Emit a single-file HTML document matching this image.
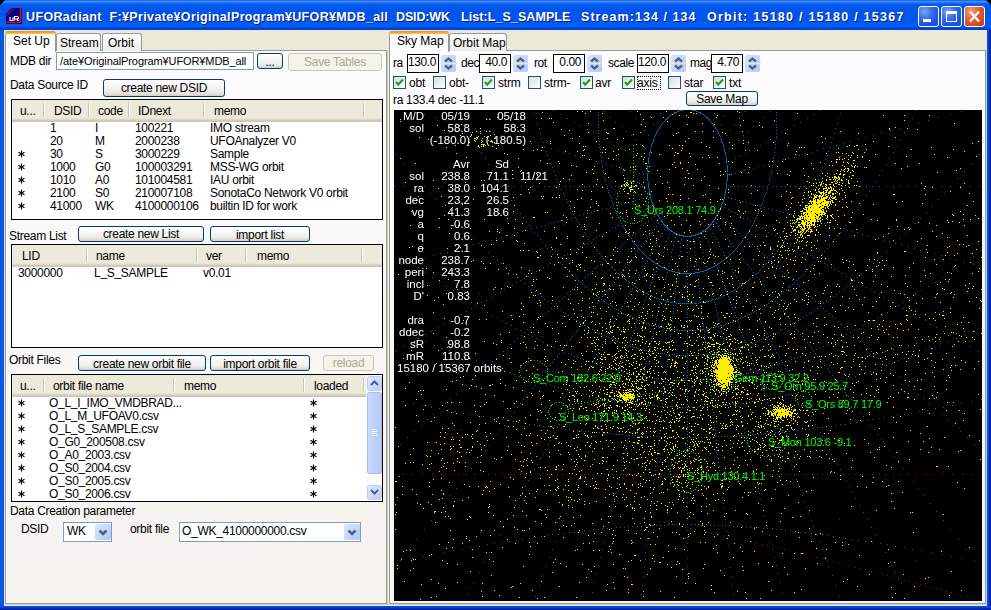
<!DOCTYPE html>
<html><head><meta charset="utf-8">
<style>
html,body{margin:0;padding:0;}
body{width:991px;height:610px;overflow:hidden;position:relative;background:#0054E3;font-family:"Liberation Sans",sans-serif;font-size:12px;color:#000;}
.a{position:absolute;}
.t{position:absolute;white-space:pre;line-height:12px;font-size:12px;}
#frame{left:0;top:0;width:991px;height:610px;background:linear-gradient(90deg,#0831D9 0,#166AEE 1px,#0855DD 2px,#0054E3 3px,#0054E3 988px,#003BDA 989px,#001EA0 990px);}
#title{left:0;top:0;width:991px;height:30px;border-radius:7px 7px 0 0;
 background:linear-gradient(180deg,#0843D6 0,#3D8DFA 1px,#3A8AF8 2px,#1769F2 3px,#0058EE 5px,#0054EA 14px,#0058EE 22px,#0064FA 26px,#0050E6 27px,#003ED8 29px);}
#client{left:4px;top:30px;width:983px;height:576px;background:#ECE9D8;}
#bottomframe{left:0;top:606px;width:991px;height:4px;background:linear-gradient(180deg,#0054E3,#003BDA 2px,#001EA0 3px);}
.ttxt{color:#fff;font-weight:bold;font-size:12.5px;line-height:12px;letter-spacing:0.6px;text-shadow:1px 1px 0 #0A1883;}
.tbtn{position:absolute;top:6px;width:19px;height:19px;border:1px solid #fff;border-radius:3px;box-sizing:content-box;
 background:radial-gradient(circle at 30% 25%,#7DA6FF 0,#3C71F0 35%,#1E52E0 70%,#1A4CD8 100%);}
.tbtn.x{background:radial-gradient(circle at 30% 25%,#F2A58A 0,#E4622F 40%,#D54418 80%,#C63C14 100%);}
.panel{position:absolute;border:1px solid #919B9C;background:linear-gradient(180deg,#FCFCFE 0,#F4F3EE 100%);box-shadow:1px 1px 0 #D0CEBF;}
.tab{position:absolute;border:1px solid #919B9C;border-bottom:none;border-radius:3px 3px 0 0;background:linear-gradient(180deg,#FFFFFF,#ECEBE5);box-sizing:border-box;}
.tab.sel{background:#FCFCFE;border-top:none;}
.tab.sel::before{content:"";position:absolute;left:-1px;right:-1px;top:0;height:3px;border-radius:3px 3px 0 0;background:linear-gradient(180deg,#E68B2C,#FFC73C);}
.btn{position:absolute;box-sizing:border-box;border:1px solid #003C74;border-radius:3px;background:linear-gradient(180deg,#FFFFFF 0,#F7F6F2 40%,#ECEBE6 75%,#D6D0C5 100%);text-align:center;white-space:pre;letter-spacing:-0.3px;}
.btn.dis{border-color:#C9C7BA;background:#F5F4EA;color:#ACA899;}
.tbox{position:absolute;box-sizing:border-box;border:1px solid #7F9DB9;background:#fff;overflow:hidden;white-space:pre;}
.lv{position:absolute;box-sizing:border-box;border:1px solid #000;background:#fff;overflow:hidden;}
.hdr{position:absolute;left:0;top:0;right:0;height:22px;background:linear-gradient(180deg,#EBEADB 0,#EBEADB 18px,#E2DFCD 19px,#D6D2BD 20px,#CBC7B8 21px);}
.sep{position:absolute;top:3px;width:1px;height:14px;background:#C7C5B2;box-shadow:1px 0 0 #fff;}
.cb{position:absolute;box-sizing:border-box;width:13px;height:13px;border:1px solid #1C5180;background:linear-gradient(135deg,#DCDCD7,#FFFFFF);}
.num{position:absolute;box-sizing:border-box;border:1px solid #000;background:#fff;text-align:right;padding-right:3px;line-height:15px;font-size:12px;letter-spacing:-0.4px;}
.map{left:394px;top:110px;width:588px;height:491px;background:#000;}
.us{position:relative;top:-1px;}

</style></head><body>
<div id="frame" class="a"></div><div id="title" class="a"></div><div id="client" class="a"></div><div id="bottomframe" class="a"></div>
<div class="a" style="left:0;top:0;width:5px;height:5px;background:#000;clip-path:polygon(0 0,100% 0,0 100%);"></div>
<div class="a" style="left:986px;top:0;width:5px;height:5px;background:#000;clip-path:polygon(0 0,100% 0,100% 100%);"></div>
<svg class="a" style="left:6px;top:8px" width="16" height="16"><path d="M6 0H16V16H0V6Z" fill="#000080"/><path d="M14.5 0V14.5H0" stroke="#FF0000" stroke-width="1.6" fill="none"/><path d="M0.5 7.5L7.5 0.5" stroke="#FF0000" stroke-width="1.2" stroke-dasharray="1.2 0.6"/><path d="M4 9V12.5H7V9M8.5 12.5V8.5H11Q12.5 8.5 12.5 10Q12.5 11 11 11H9M10.5 11L12.5 13" stroke="#fff" stroke-width="1.1" fill="none"/></svg>
<div class="t ttxt" style="left:26px;top:11px;letter-spacing:0.36px">UFORadiant  F:¥Private¥OriginalProgram¥UFOR¥MDB_all</div>
<div class="t ttxt" style="left:396px;top:11px;letter-spacing:-0.15px">DSID:WK</div>
<div class="t ttxt" style="left:461px;top:11px;letter-spacing:0.07px">List:L_S_SAMPLE</div>
<div class="t ttxt" style="left:581px;top:11px;letter-spacing:1.05px">Stream:134 / 134</div>
<div class="t ttxt" style="left:707px;top:11px;letter-spacing:1.25px">Orbit: 15180 / 15180 / 15367</div>
<div class="tbtn" style="left:918px;"><div class="a" style="left:4px;top:12px;width:8px;height:3px;background:#fff;"></div></div>
<div class="tbtn" style="left:941px;"><div class="a" style="left:4px;top:4px;width:11px;height:11px;box-sizing:border-box;border:1px solid #fff;border-top-width:3px;"></div></div>
<div class="tbtn x" style="left:964px;"><svg class="a" style="left:2px;top:3px" width="15" height="13"><path d="M3 1.5L12 11.5M12 1.5L3 11.5" stroke="#fff" stroke-width="2.2"/></svg></div>
<div class="panel" style="left:5px;top:50px;width:380px;height:552px;"></div>
<div class="tab" style="left:56px;top:33px;width:45px;height:18px;"></div>
<div class="tab" style="left:102px;top:33px;width:40px;height:18px;"></div>
<div class="tab sel" style="left:5px;top:31px;width:51px;height:21px;"></div>
<div class="t" style="left:13px;top:35px;font-size:12px;letter-spacing:0px;">Set Up</div>
<div class="t" style="left:60px;top:37px;font-size:12px;letter-spacing:0px;">Stream</div>
<div class="t" style="left:108px;top:37px;font-size:12px;letter-spacing:0px;">Orbit</div>
<div class="t" style="left:10px;top:55px;font-size:12px;letter-spacing:-0.3px;">MDB dir</div>
<div class="tbox" style="left:56px;top:52px;width:198px;height:18px;padding-left:3px;line-height:17px;font-size:11px;letter-spacing:-0.1px">/ate¥OriginalProgram¥UFOR¥MDB_all</div>
<div class="btn" style="left:257px;top:53px;width:26px;height:16px;font-size:12px;line-height:17px;">...</div>
<div class="btn dis" style="left:288px;top:53px;width:94px;height:18px;font-size:12px;line-height:17px;">Save Tables</div>
<div class="t" style="left:10px;top:79px;font-size:12px;letter-spacing:-0.3px;">Data Source ID</div>
<div class="btn" style="left:103px;top:79px;width:122px;height:18px;font-size:12px;line-height:17px;">create new DSID</div>
<div class="lv" style="left:11px;top:99px;width:372px;height:121px;"><div class="hdr" style=""></div><div class="sep" style="left:31px"></div><div class="t" style="left:8px;top:5px;font-size:12px;letter-spacing:-0.3px">u...</div><div class="sep" style="left:76px"></div><div class="t" style="left:42px;top:5px;font-size:12px;letter-spacing:-0.3px">DSID</div><div class="sep" style="left:116px"></div><div class="t" style="left:86px;top:5px;font-size:12px;letter-spacing:-0.3px">code</div><div class="sep" style="left:191px"></div><div class="t" style="left:126px;top:5px;font-size:12px;letter-spacing:-0.3px">IDnext</div><div class="sep" style="left:351px"></div><div class="t" style="left:202px;top:5px;font-size:12px;letter-spacing:-0.3px">memo</div><svg class="a" style="left:6px;top:50px" width="8" height="8"><path d="M3.5 0.5V7.5M0.5 2.2L6.5 5.8M0.5 5.8L6.5 2.2" stroke="#000" stroke-width="1.1"/></svg><svg class="a" style="left:6px;top:63px" width="8" height="8"><path d="M3.5 0.5V7.5M0.5 2.2L6.5 5.8M0.5 5.8L6.5 2.2" stroke="#000" stroke-width="1.1"/></svg><svg class="a" style="left:6px;top:76px" width="8" height="8"><path d="M3.5 0.5V7.5M0.5 2.2L6.5 5.8M0.5 5.8L6.5 2.2" stroke="#000" stroke-width="1.1"/></svg><svg class="a" style="left:6px;top:89px" width="8" height="8"><path d="M3.5 0.5V7.5M0.5 2.2L6.5 5.8M0.5 5.8L6.5 2.2" stroke="#000" stroke-width="1.1"/></svg><svg class="a" style="left:6px;top:102px" width="8" height="8"><path d="M3.5 0.5V7.5M0.5 2.2L6.5 5.8M0.5 5.8L6.5 2.2" stroke="#000" stroke-width="1.1"/></svg><div class="t" style="left:38px;top:22px;font-size:12px;letter-spacing:-0.3px">1</div><div class="t" style="left:38px;top:35px;font-size:12px;letter-spacing:-0.3px">20</div><div class="t" style="left:38px;top:48px;font-size:12px;letter-spacing:-0.3px">30</div><div class="t" style="left:38px;top:61px;font-size:12px;letter-spacing:-0.3px">1000</div><div class="t" style="left:38px;top:74px;font-size:12px;letter-spacing:-0.3px">1010</div><div class="t" style="left:38px;top:87px;font-size:12px;letter-spacing:-0.3px">2100</div><div class="t" style="left:38px;top:100px;font-size:12px;letter-spacing:-0.3px">41000</div><div class="t" style="left:83px;top:22px;font-size:12px;letter-spacing:-0.3px">I</div><div class="t" style="left:83px;top:35px;font-size:12px;letter-spacing:-0.3px">M</div><div class="t" style="left:83px;top:48px;font-size:12px;letter-spacing:-0.3px">S</div><div class="t" style="left:83px;top:61px;font-size:12px;letter-spacing:-0.3px">G0</div><div class="t" style="left:83px;top:74px;font-size:12px;letter-spacing:-0.3px">A0</div><div class="t" style="left:83px;top:87px;font-size:12px;letter-spacing:-0.3px">S0</div><div class="t" style="left:83px;top:100px;font-size:12px;letter-spacing:-0.3px">WK</div><div class="t" style="left:123px;top:22px;font-size:12px;letter-spacing:-0.3px">100221</div><div class="t" style="left:123px;top:35px;font-size:12px;letter-spacing:-0.3px">2000238</div><div class="t" style="left:123px;top:48px;font-size:12px;letter-spacing:-0.3px">3000229</div><div class="t" style="left:123px;top:61px;font-size:12px;letter-spacing:-0.3px">100003291</div><div class="t" style="left:123px;top:74px;font-size:12px;letter-spacing:-0.3px">101004581</div><div class="t" style="left:123px;top:87px;font-size:12px;letter-spacing:-0.3px">210007108</div><div class="t" style="left:123px;top:100px;font-size:12px;letter-spacing:-0.3px">4100000106</div><div class="t" style="left:198px;top:22px;font-size:12px;letter-spacing:-0.3px">IMO stream</div><div class="t" style="left:198px;top:35px;font-size:12px;letter-spacing:-0.3px">UFOAnalyzer V0</div><div class="t" style="left:198px;top:48px;font-size:12px;letter-spacing:-0.3px">Sample</div><div class="t" style="left:198px;top:61px;font-size:12px;letter-spacing:-0.3px">MSS-WG orbit</div><div class="t" style="left:198px;top:74px;font-size:12px;letter-spacing:-0.3px">IAU orbit</div><div class="t" style="left:198px;top:87px;font-size:12px;letter-spacing:-0.3px">SonotaCo Network V0 orbit</div><div class="t" style="left:198px;top:100px;font-size:12px;letter-spacing:-0.3px">builtin ID for work</div></div>
<div class="t" style="left:9px;top:230px;font-size:12px;letter-spacing:-0.3px;">Stream List</div>
<div class="btn" style="left:78px;top:226px;width:126px;height:16px;font-size:12px;line-height:15px;">create new List</div>
<div class="btn" style="left:210px;top:226px;width:100px;height:16px;font-size:12px;line-height:16px;">import list</div>
<div class="lv" style="left:11px;top:244px;width:372px;height:104px;"><div class="hdr" style=""></div><div class="sep" style="left:74px"></div><div class="t" style="left:10px;top:5px;font-size:12px;letter-spacing:-0.3px">LID</div><div class="sep" style="left:184px"></div><div class="t" style="left:84px;top:5px;font-size:12px;letter-spacing:-0.3px">name</div><div class="sep" style="left:233px"></div><div class="t" style="left:194px;top:5px;font-size:12px;letter-spacing:-0.3px">ver</div><div class="sep" style="left:349px"></div><div class="t" style="left:245px;top:5px;font-size:12px;letter-spacing:-0.3px">memo</div><div class="t" style="left:6px;top:22px;font-size:12px;letter-spacing:-0.3px">3000000</div><div class="t" style="left:82px;top:22px;font-size:12px;letter-spacing:-0.3px">L<span class="us">_</span>S<span class="us">_</span>SAMPLE</div><div class="t" style="left:191px;top:22px;font-size:12px;letter-spacing:-0.3px">v0.01</div></div>
<div class="t" style="left:9px;top:354px;font-size:12px;letter-spacing:-0.3px;">Orbit Files</div>
<div class="btn" style="left:78px;top:355px;width:128px;height:16px;font-size:12px;line-height:16px;">create new orbit file</div>
<div class="btn" style="left:210px;top:355px;width:100px;height:16px;font-size:12px;line-height:16px;">import orbit file</div>
<div class="btn dis" style="left:323px;top:355px;width:51px;height:16px;font-size:12px;line-height:15px;">reload</div>
<div class="lv" style="left:11px;top:374px;width:372px;height:128px;"><div class="hdr" style="right:16px"></div><div class="sep" style="left:31px"></div><div class="t" style="left:8px;top:5px;font-size:12px;letter-spacing:-0.3px">u...</div><div class="sep" style="left:161px"></div><div class="t" style="left:41px;top:5px;font-size:12px;letter-spacing:-0.3px">orbit file name</div><div class="sep" style="left:291px"></div><div class="t" style="left:172px;top:5px;font-size:12px;letter-spacing:-0.3px">memo</div><div class="sep" style="left:351px"></div><div class="t" style="left:302px;top:5px;font-size:12px;letter-spacing:-0.3px">loaded</div><svg class="a" style="left:6px;top:24px" width="8" height="8"><path d="M3.5 0.5V7.5M0.5 2.2L6.5 5.8M0.5 5.8L6.5 2.2" stroke="#000" stroke-width="1.1"/></svg><svg class="a" style="left:6px;top:37px" width="8" height="8"><path d="M3.5 0.5V7.5M0.5 2.2L6.5 5.8M0.5 5.8L6.5 2.2" stroke="#000" stroke-width="1.1"/></svg><svg class="a" style="left:6px;top:50px" width="8" height="8"><path d="M3.5 0.5V7.5M0.5 2.2L6.5 5.8M0.5 5.8L6.5 2.2" stroke="#000" stroke-width="1.1"/></svg><svg class="a" style="left:6px;top:63px" width="8" height="8"><path d="M3.5 0.5V7.5M0.5 2.2L6.5 5.8M0.5 5.8L6.5 2.2" stroke="#000" stroke-width="1.1"/></svg><svg class="a" style="left:6px;top:76px" width="8" height="8"><path d="M3.5 0.5V7.5M0.5 2.2L6.5 5.8M0.5 5.8L6.5 2.2" stroke="#000" stroke-width="1.1"/></svg><svg class="a" style="left:6px;top:89px" width="8" height="8"><path d="M3.5 0.5V7.5M0.5 2.2L6.5 5.8M0.5 5.8L6.5 2.2" stroke="#000" stroke-width="1.1"/></svg><svg class="a" style="left:6px;top:102px" width="8" height="8"><path d="M3.5 0.5V7.5M0.5 2.2L6.5 5.8M0.5 5.8L6.5 2.2" stroke="#000" stroke-width="1.1"/></svg><svg class="a" style="left:6px;top:115px" width="8" height="8"><path d="M3.5 0.5V7.5M0.5 2.2L6.5 5.8M0.5 5.8L6.5 2.2" stroke="#000" stroke-width="1.1"/></svg><div class="t" style="left:37px;top:22px;font-size:12px;letter-spacing:-0.3px">O<span class="us">_</span>L<span class="us">_</span>I<span class="us">_</span>IMO<span class="us">_</span>VMDBRAD...</div><div class="t" style="left:37px;top:35px;font-size:12px;letter-spacing:-0.3px">O<span class="us">_</span>L<span class="us">_</span>M<span class="us">_</span>UFOAV0.csv</div><div class="t" style="left:37px;top:48px;font-size:12px;letter-spacing:-0.3px">O<span class="us">_</span>L<span class="us">_</span>S<span class="us">_</span>SAMPLE.csv</div><div class="t" style="left:37px;top:61px;font-size:12px;letter-spacing:-0.3px">O<span class="us">_</span>G0<span class="us">_</span>200508.csv</div><div class="t" style="left:37px;top:74px;font-size:12px;letter-spacing:-0.3px">O<span class="us">_</span>A0<span class="us">_</span>2003.csv</div><div class="t" style="left:37px;top:87px;font-size:12px;letter-spacing:-0.3px">O<span class="us">_</span>S0<span class="us">_</span>2004.csv</div><div class="t" style="left:37px;top:100px;font-size:12px;letter-spacing:-0.3px">O<span class="us">_</span>S0<span class="us">_</span>2005.csv</div><div class="t" style="left:37px;top:113px;font-size:12px;letter-spacing:-0.3px">O<span class="us">_</span>S0<span class="us">_</span>2006.csv</div><svg class="a" style="left:298px;top:24px" width="8" height="8"><path d="M3.5 0.5V7.5M0.5 2.2L6.5 5.8M0.5 5.8L6.5 2.2" stroke="#000" stroke-width="1.1"/></svg><svg class="a" style="left:298px;top:37px" width="8" height="8"><path d="M3.5 0.5V7.5M0.5 2.2L6.5 5.8M0.5 5.8L6.5 2.2" stroke="#000" stroke-width="1.1"/></svg><svg class="a" style="left:298px;top:50px" width="8" height="8"><path d="M3.5 0.5V7.5M0.5 2.2L6.5 5.8M0.5 5.8L6.5 2.2" stroke="#000" stroke-width="1.1"/></svg><svg class="a" style="left:298px;top:63px" width="8" height="8"><path d="M3.5 0.5V7.5M0.5 2.2L6.5 5.8M0.5 5.8L6.5 2.2" stroke="#000" stroke-width="1.1"/></svg><svg class="a" style="left:298px;top:76px" width="8" height="8"><path d="M3.5 0.5V7.5M0.5 2.2L6.5 5.8M0.5 5.8L6.5 2.2" stroke="#000" stroke-width="1.1"/></svg><svg class="a" style="left:298px;top:89px" width="8" height="8"><path d="M3.5 0.5V7.5M0.5 2.2L6.5 5.8M0.5 5.8L6.5 2.2" stroke="#000" stroke-width="1.1"/></svg><svg class="a" style="left:298px;top:102px" width="8" height="8"><path d="M3.5 0.5V7.5M0.5 2.2L6.5 5.8M0.5 5.8L6.5 2.2" stroke="#000" stroke-width="1.1"/></svg><svg class="a" style="left:298px;top:115px" width="8" height="8"><path d="M3.5 0.5V7.5M0.5 2.2L6.5 5.8M0.5 5.8L6.5 2.2" stroke="#000" stroke-width="1.1"/></svg><div class="a" style="left:354px;top:0;width:16px;height:126px;background:#FBFBF8;"></div><svg class="a" style="left:354px;top:0" width="16" height="126"><defs><linearGradient id="sb1" x1="0" y1="0" x2="1" y2="1"><stop offset="0" stop-color="#E2EBFE"/><stop offset="1" stop-color="#B8CCF8"/></linearGradient><linearGradient id="sb2" x1="0" y1="0" x2="1" y2="0"><stop offset="0" stop-color="#CBDAFC"/><stop offset="1" stop-color="#B5C9F7"/></linearGradient></defs><rect x="1.5" y="1.5" width="14" height="14" rx="2" fill="url(#sb1)" stroke="#BCCDF5"/><rect x="1.5" y="17.5" width="14" height="81" rx="2" fill="url(#sb2)" stroke="#A6BCEF"/><rect x="1.5" y="110.5" width="14" height="14" rx="2" fill="url(#sb1)" stroke="#BCCDF5"/><path d="M5 10L8.5 6.5L12 10" stroke="#4D6185" stroke-width="2" fill="none"/><path d="M5 115L8.5 118.5L12 115" stroke="#4D6185" stroke-width="2" fill="none"/><path d="M5.5 54.5H11.5M5.5 56.5H11.5M5.5 58.5H11.5M5.5 60.5H11.5" stroke="#EEF3FE"/></svg></div>
<div class="t" style="left:10px;top:505px;font-size:12px;letter-spacing:-0.3px;">Data Creation parameter</div>
<div class="t" style="left:21px;top:523px;font-size:12px;letter-spacing:-0.3px;">DSID</div>
<div class="tbox" style="left:63px;top:522px;width:49px;height:20px;padding-left:3px;line-height:16px;font-size:12px;letter-spacing:-0.3px">WK</div>
<svg class="a" style="left:95px;top:524px" width="16" height="16"><defs><linearGradient id="cg" x1="0" y1="0" x2="1" y2="1"><stop offset="0" stop-color="#DCE7FE"/><stop offset="1" stop-color="#B2C6F6"/></linearGradient></defs><rect width="16" height="16" rx="2" fill="url(#cg)"/><path d="M4.5 6.5L8 10L11.5 6.5" stroke="#4D6185" stroke-width="2.5" fill="none"/></svg>
<div class="t" style="left:130px;top:523px;font-size:12px;letter-spacing:-0.3px;">orbit file</div>
<div class="tbox" style="left:179px;top:522px;width:182px;height:20px;padding-left:2px;line-height:16px;font-size:12px;letter-spacing:-0.3px">O_WK_4100000000.csv</div>
<svg class="a" style="left:344px;top:524px" width="16" height="16"><rect width="16" height="16" rx="2" fill="url(#cg)"/><path d="M4.5 6.5L8 10L11.5 6.5" stroke="#4D6185" stroke-width="2.5" fill="none"/></svg>
<div class="panel" style="left:389px;top:50px;width:595px;height:552px;"></div>
<div class="tab" style="left:449px;top:33px;width:58px;height:18px;"></div>
<div class="tab sel" style="left:389px;top:31px;width:60px;height:21px;"></div>
<div class="t" style="left:397px;top:35px;font-size:12px;letter-spacing:0px;">Sky Map</div>
<div class="t" style="left:453px;top:37px;font-size:12px;letter-spacing:0px;">Orbit Map</div>
<div class="t" style="left:393px;top:57px;font-size:12px;letter-spacing:-0.4px;">ra</div>
<div class="num" style="left:407px;top:54px;width:32px;height:19px;">130.0</div>
<svg class="a" style="left:440px;top:55px" width="17" height="17"><defs><linearGradient id="sg441" x1="0" y1="0" x2="1" y2="1"><stop offset="0" stop-color="#D8E4FE"/><stop offset="1" stop-color="#B4C8F7"/></linearGradient></defs><rect x="1" y="0" width="15" height="17" rx="2" fill="url(#sg441)"/><rect x="0" y="8" width="17" height="1" fill="#E9E6D4"/><path d="M5 6.5L8.5 3.5L12 6.5" fill="none" stroke="#4D6185" stroke-width="2.4"/><path d="M5 10.5L8.5 13.5L12 10.5" fill="none" stroke="#4D6185" stroke-width="2.4"/></svg>
<div class="t" style="left:461px;top:57px;font-size:12px;letter-spacing:-0.4px;">dec</div>
<div class="num" style="left:479px;top:54px;width:32px;height:19px;">40.0</div>
<svg class="a" style="left:512px;top:55px" width="17" height="17"><defs><linearGradient id="sg513" x1="0" y1="0" x2="1" y2="1"><stop offset="0" stop-color="#D8E4FE"/><stop offset="1" stop-color="#B4C8F7"/></linearGradient></defs><rect x="1" y="0" width="15" height="17" rx="2" fill="url(#sg513)"/><rect x="0" y="8" width="17" height="1" fill="#E9E6D4"/><path d="M5 6.5L8.5 3.5L12 6.5" fill="none" stroke="#4D6185" stroke-width="2.4"/><path d="M5 10.5L8.5 13.5L12 10.5" fill="none" stroke="#4D6185" stroke-width="2.4"/></svg>
<div class="t" style="left:534px;top:57px;font-size:12px;letter-spacing:-0.4px;">rot</div>
<div class="num" style="left:553px;top:54px;width:32px;height:19px;">0.00</div>
<svg class="a" style="left:586px;top:55px" width="17" height="17"><defs><linearGradient id="sg587" x1="0" y1="0" x2="1" y2="1"><stop offset="0" stop-color="#D8E4FE"/><stop offset="1" stop-color="#B4C8F7"/></linearGradient></defs><rect x="1" y="0" width="15" height="17" rx="2" fill="url(#sg587)"/><rect x="0" y="8" width="17" height="1" fill="#E9E6D4"/><path d="M5 6.5L8.5 3.5L12 6.5" fill="none" stroke="#4D6185" stroke-width="2.4"/><path d="M5 10.5L8.5 13.5L12 10.5" fill="none" stroke="#4D6185" stroke-width="2.4"/></svg>
<div class="t" style="left:608px;top:57px;font-size:12px;letter-spacing:-0.4px;">scale</div>
<div class="num" style="left:637px;top:54px;width:32px;height:19px;">120.0</div>
<svg class="a" style="left:670px;top:55px" width="17" height="17"><defs><linearGradient id="sg671" x1="0" y1="0" x2="1" y2="1"><stop offset="0" stop-color="#D8E4FE"/><stop offset="1" stop-color="#B4C8F7"/></linearGradient></defs><rect x="1" y="0" width="15" height="17" rx="2" fill="url(#sg671)"/><rect x="0" y="8" width="17" height="1" fill="#E9E6D4"/><path d="M5 6.5L8.5 3.5L12 6.5" fill="none" stroke="#4D6185" stroke-width="2.4"/><path d="M5 10.5L8.5 13.5L12 10.5" fill="none" stroke="#4D6185" stroke-width="2.4"/></svg>
<div class="t" style="left:690px;top:57px;font-size:12px;letter-spacing:-0.4px;">mag</div>
<div class="num" style="left:711px;top:54px;width:32px;height:19px;">4.70</div>
<svg class="a" style="left:744px;top:55px" width="17" height="17"><defs><linearGradient id="sg745" x1="0" y1="0" x2="1" y2="1"><stop offset="0" stop-color="#D8E4FE"/><stop offset="1" stop-color="#B4C8F7"/></linearGradient></defs><rect x="1" y="0" width="15" height="17" rx="2" fill="url(#sg745)"/><rect x="0" y="8" width="17" height="1" fill="#E9E6D4"/><path d="M5 6.5L8.5 3.5L12 6.5" fill="none" stroke="#4D6185" stroke-width="2.4"/><path d="M5 10.5L8.5 13.5L12 10.5" fill="none" stroke="#4D6185" stroke-width="2.4"/></svg>
<div class="cb" style="left:393px;top:76px;"></div><svg class="a" style="left:393px;top:76px" width="13" height="13"><path d="M3 6L5.2 8.5L10 3.5" stroke="#21A121" stroke-width="2.2" fill="none"/></svg>
<div class="t" style="left:409px;top:77px;font-size:12px;letter-spacing:-0.2px;">obt</div>
<div class="cb" style="left:433px;top:76px;"></div>
<div class="t" style="left:449px;top:77px;font-size:12px;letter-spacing:-0.2px;">obt-</div>
<div class="cb" style="left:482px;top:76px;"></div><svg class="a" style="left:482px;top:76px" width="13" height="13"><path d="M3 6L5.2 8.5L10 3.5" stroke="#21A121" stroke-width="2.2" fill="none"/></svg>
<div class="t" style="left:498px;top:77px;font-size:12px;letter-spacing:-0.2px;">strm</div>
<div class="cb" style="left:528px;top:76px;"></div>
<div class="t" style="left:544px;top:77px;font-size:12px;letter-spacing:-0.2px;">strm-</div>
<div class="cb" style="left:580px;top:76px;"></div><svg class="a" style="left:580px;top:76px" width="13" height="13"><path d="M3 6L5.2 8.5L10 3.5" stroke="#21A121" stroke-width="2.2" fill="none"/></svg>
<div class="t" style="left:595px;top:77px;font-size:12px;letter-spacing:-0.2px;">avr</div>
<div class="cb" style="left:622px;top:76px;"></div><svg class="a" style="left:622px;top:76px" width="13" height="13"><path d="M3 6L5.2 8.5L10 3.5" stroke="#21A121" stroke-width="2.2" fill="none"/></svg>
<div class="t" style="left:637px;top:77px;font-size:12px;letter-spacing:-0.2px;">axis</div>
<div class="cb" style="left:668px;top:76px;"></div>
<div class="t" style="left:684px;top:77px;font-size:12px;letter-spacing:-0.2px;">star</div>
<div class="cb" style="left:713px;top:76px;"></div><svg class="a" style="left:713px;top:76px" width="13" height="13"><path d="M3 6L5.2 8.5L10 3.5" stroke="#21A121" stroke-width="2.2" fill="none"/></svg>
<div class="t" style="left:729px;top:77px;font-size:12px;letter-spacing:-0.2px;">txt</div>
<div class="a" style="left:637px;top:76px;width:24px;height:14px;box-sizing:border-box;border:1px dotted #000;"></div>
<div class="t" style="left:393px;top:94px;font-size:12px;letter-spacing:-0.3px;">ra 133.4 dec -11.1</div>
<div class="btn" style="left:686px;top:91px;width:72px;height:15px;font-size:12px;line-height:15px;">Save Map</div>
<canvas id="map" class="a map" width="588" height="491"></canvas>
<script>
(function(){
var c=document.getElementById('map'),x=c.getContext('2d');
var W=588,H=491,OX=394,OY=110;
var img=x.createImageData(W,H),d=img.data;
for(var i=0;i<W*H;i++){d[i*4+3]=255;}
function px(X,Y,col){X=Math.round(X);Y=Math.round(Y);if(X<0||Y<0||X>=W||Y>=H)return;var k=(Y*W+X)*4;d[k]=col[0];d[k+1]=col[1];d[k+2]=col[2];}
var s=20240611;function rnd(){s|=0;s=s+0x6D2B79F5|0;var t=Math.imul(s^s>>>15,1|s);t=t+Math.imul(t^t>>>7,61|t)^t;return((t^t>>>14)>>>0)/4294967296;}
function gauss(){var u=rnd()||1e-9,v=rnd();return Math.sqrt(-2*Math.log(u))*Math.cos(2*Math.PI*v);}
var D=Math.PI/180,ra0=130*D,de0=40*D,S=142,CX=293,CY=245;
function proj(ra,de){ra*=D;de*=D;var cc=Math.sin(de0)*Math.sin(de)+Math.cos(de0)*Math.cos(de)*Math.cos(ra-ra0);if(cc<=0.01)return null;
 var X=Math.cos(de)*Math.sin(ra-ra0)/cc,Y=(Math.cos(de0)*Math.sin(de)-Math.sin(de0)*Math.cos(de)*Math.cos(ra-ra0))/cc;return[CX-S*X,CY-S*Y];}
var BL=[0,104,190],RED=[185,0,0],GR=[0,220,0],YE=[255,240,0];
// dec circles, 1 deg RA steps
for(var de=-30;de<=80;de+=10){for(var ra=0;ra<360;ra+=1){var p=proj(ra,de);if(p)px(p[0],p[1],de==0?RED:BL);}}
// meridians, 1 deg dec steps
for(var ra=0;ra<360;ra+=10){for(var de=-40;de<=80;de+=1){var p=proj(ra,de);if(p)px(p[0],p[1],BL);}}
// red curve
(function(){var P=[[659,521],[700,530],[740,539],[800,553],[860,568],[920,584],[977,599]];
 for(var i=1;i<P.length;i++){var a=P[i-1],b=P[i],L=Math.hypot(b[0]-a[0],b[1]-a[1]),n=Math.round(L/5.5);for(var j=0;j<n;j++){px(a[0]+(b[0]-a[0])*j/n-OX,a[1]+(b[1]-a[1])*j/n-OY,RED);}}})();
// yellow points (absolute coords)
function addG(cx,cy,sx,sy,ang,n,cut){cx-=OX;cy-=OY;var ca=Math.cos(ang),sa=Math.sin(ang);for(var i=0;i<n;i++){var u=gauss()*sx,v=gauss()*sy;var X=cx+u*ca-v*sa,Y=cy+u*sa+v*ca;
 if(cut&&Y+OY>cut&&rnd()>Math.exp(-(Y+OY-cut)/22))continue; px(X,Y,YE);}}
for(var i=0;i<600;i++){px(rnd()*W,rnd()*H,YE);}
addG(648,333,151,93,-1.69,1900);
addG(764,376,55,231,-1.89,1900);
addG(813,212,12,4.8,-0.95,1000);
addG(832,186,22,6,-0.95,260);
addG(810,218,40,18,-0.95,300);
addG(723,371,4.5,7.5,0,1300);
addG(723,371,20,25,0,350);
addG(782,412,5.5,2.8,0.05,280);
addG(782,412,12,8,0,120);
addG(626,397,3.5,2.5,0,180);
addG(626,397,16,11,0,120);
addG(625,365,25,22,0,220);
addG(665,405,45,64,0,650);
addG(686,465,14,14,0,120);
addG(767,440,15,12,0,100);
addG(628,187,4,3,0,40);
addG(480,140,7,5,0,45);
addG(455,452,12,10,0,30);
for(var i=0;i<30;i++){px(rnd()*W,rnd()*H,[200,0,0]);}
// green
function ell(cx,cy,rx,ry,step){var n=Math.round(2*Math.PI*Math.max(rx,ry)/step);for(var i=0;i<n;i++){var t=2*Math.PI*i/n;px(cx+rx*Math.cos(t)-OX,cy+ry*Math.sin(t)-OY,GR);}}
function gl(x0,y0,x1,y1,step){var L=Math.hypot(x1-x0,y1-y0),n=Math.round(L/step);for(var i=0;i<=n;i++){px(x0+(x1-x0)*i/n-OX,y0+(y1-y0)*i/n-OY,GR);}}
ell(632,202,16,21,3);gl(633,145,633,204,3);
ell(533,371,14,11,3);
ell(558,411,10,9,2.5);gl(563,405,670,390,3);
ell(772,381,10,8,2);ell(722,371,17,20,3.5);
ell(803,398,8,7,2.5);
ell(767,440,20,16,3.5);
ell(686,471,16,21,3);
gl(821,367,964,331,8);
x.putImageData(img,0,0);
})();
</script>

<div class="a" style="left:394px;top:110px;width:588px;height:491px;overflow:hidden;font-size:11.5px;line-height:12px;color:#fff;">
<div class="a" style="left:0;top:0px;width:30px;text-align:right;white-space:pre;">M/D
sol</div>
<div class="a" style="left:0;top:0px;width:76px;text-align:right;white-space:pre;">05/19
58.8
(-180.0)</div>
<div class="a" style="left:91px;top:0px;white-space:pre;">..
..</div>
<div class="a" style="left:0;top:0px;width:132px;text-align:right;white-space:pre;">05/18
58.3
(-180.5)</div>
<div class="a" style="left:0;top:48px;width:30px;text-align:right;white-space:pre;">
sol
ra
dec
vg
a
q
e
node
peri
incl
D'

dra
ddec
sR
mR</div>
<div class="a" style="left:0;top:48px;width:76px;text-align:right;white-space:pre;">Avr
238.8
38.0
23.2
41.3
-0.6
0.6
2.1
238.7
243.3
7.8
0.83

-0.7
-0.2
98.8
110.8</div>
<div class="a" style="left:0;top:48px;width:115px;text-align:right;white-space:pre;">Sd
71.1
104.1
26.5
18.6</div>
<div class="a" style="left:0;top:60px;width:154px;text-align:right;white-space:pre;">11/21</div>
<div class="a" style="left:3px;top:252px;white-space:pre;">15180 / 15367 orbits</div>
</div>
<div class="a" style="left:394px;top:110px;width:588px;height:491px;overflow:hidden;font-size:11px;line-height:12px;color:#00FF00;white-space:pre;letter-spacing:-0.25px;">
<div class="a" style="left:240px;top:94px;">S_Urs 208.1 74.9</div>
<div class="a" style="left:139px;top:262px;">S_Com 182.6 22.0</div>
<div class="a" style="left:165px;top:301px;">S_Leo 171.9 14.3</div>
<div class="a" style="left:340px;top:262px;">Gem 113.9 32.2</div>
<div class="a" style="left:377px;top:270px;">S_Orn 95.9 25.7</div>
<div class="a" style="left:411px;top:288px;">S_Ors 89.7 17.9</div>
<div class="a" style="left:374px;top:326px;">S_Mon 103.6 -9.1</div>
<div class="a" style="left:293px;top:360px;">S_Hyd 130.4 1.1</div>
</div>

</body></html>
